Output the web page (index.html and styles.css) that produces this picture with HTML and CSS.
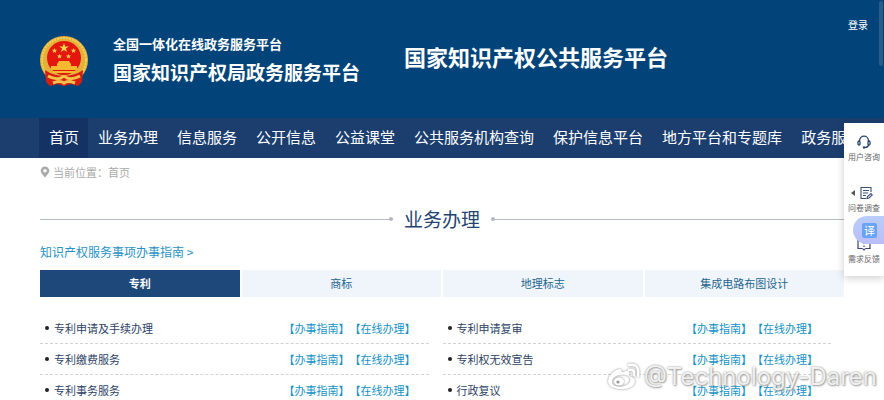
FILE: index.html
```html
<!DOCTYPE html>
<html lang="zh-CN">
<head>
<meta charset="utf-8">
<title>国家知识产权公共服务平台</title>
<link rel="stylesheet" href="styles.css">
</head>
<body>
<header class="header">
  <svg class="emblem" viewBox="0 0 48 50" aria-hidden="true">
    <circle cx="24" cy="24" r="24" fill="#e3b03a"/>
    <circle cx="24" cy="24" r="22" fill="none" stroke="#f4cf5c" stroke-width="2" stroke-dasharray="2 1"/>
    <path d="M5 34 L10 37 Q24 43 38 37 L43 34 L42 46 L38 50 L31 48 L24 50 L17 48 L10 50 L6 46 Z" fill="#d81e12"/>
    <circle cx="24" cy="22" r="17" fill="#e3170d"/>
    <path d="M24 7 l1.2 3.4 3.6 0 -2.9 2.2 1.1 3.5 -3 -2.1 -3 2.1 1.1 -3.5 -2.9 -2.2 3.6 0z" fill="#f9d34b"/>
    <path d="M14.500 12 l.7 1.800 2 0 -1.600 1.200 .6 1.900 -1.700 -1.100 -1.700 1.100 .6 -1.900 -1.600 -1.200 2 0z M33.500 12 l.7 1.800 2 0 -1.600 1.200 .6 1.900 -1.700 -1.100 -1.700 1.100 .6 -1.900 -1.600 -1.200 2 0z M19.500 18 l.7 1.600 1.800 0 -1.400 1.100 .5 1.700 -1.600 -1 -1.600 1 .5 -1.700 -1.400 -1.100 1.800 0z M28.500 18 l.7 1.600 1.800 0 -1.400 1.100 .5 1.700 -1.600 -1 -1.600 1 .5 -1.700 -1.400 -1.100 1.800 0z" fill="#f9d34b"/>
    <path d="M19 25 H29 L31 28 H17 Z M17 28 H31 V30 H37 V34 H11 V30 H17 Z M12 35 H36 V37 H12 Z" fill="#f5b82e"/>
    <path d="M8 40 Q15 44 21 42 Q24 39 27 42 Q33 44 40 40 M13 47 Q20 44 24 47 Q28 44 35 47" fill="none" stroke="#f2c14a" stroke-width="3"/>
  </svg>
  <div class="brand">
    <span class="brand-top">全国一体化在线政务服务平台</span>
    <span class="brand-main">国家知识产权局政务服务平台</span>
  </div>
  <h1 class="site-title">国家知识产权公共服务平台</h1>
  <a class="login" href="#">登录</a>
</header>
<nav class="nav">
  <a class="nav-item active" href="#">首页</a>
  <a class="nav-item" href="#">业务办理</a>
  <a class="nav-item" href="#">信息服务</a>
  <a class="nav-item" href="#">公开信息</a>
  <a class="nav-item" href="#">公益课堂</a>
  <a class="nav-item" href="#">公共服务机构查询</a>
  <a class="nav-item" href="#">保护信息平台</a>
  <a class="nav-item" href="#">地方平台和专题库</a>
  <a class="nav-item" href="#">政务服务</a>
</nav>
<main class="content">
  <div class="crumbs">
    <svg class="pin" viewBox="0 0 10 12" aria-hidden="true"><path fill-rule="evenodd" d="M5 0.500 A4.300 4.300 0 0 1 9.300 4.800 C9.300 7.500 6.500 9.500 5 11.500 C3.500 9.500 .7 7.500 .7 4.800 A4.300 4.300 0 0 1 5 .5 Z M5 3 A1.800 1.800 0 1 0 5 6.600 A1.800 1.800 0 1 0 5 3 Z" fill="#aaa"/></svg>
    <span>当前位置：<a href="#">首页</a></span>
  </div>
  <div class="section-head">
    <span class="rule rule-left"></span>
    <h2>业务办理</h2>
    <span class="rule rule-right"></span>
  </div>
  <a class="guide" href="#">知识产权服务事项办事指南 &gt;</a>
  <div class="tabs">
    <button class="tab selected" type="button">专利</button>
    <button class="tab" type="button">商标</button>
    <button class="tab" type="button">地理标志</button>
    <button class="tab" type="button">集成电路布图设计</button>
  </div>
  <ul class="services">
    <li><span class="name">专利申请及手续办理</span><a href="#">【办事指南】</a><a href="#">【在线办理】</a></li>
    <li><span class="name">专利申请复审</span><a href="#">【办事指南】</a><a href="#">【在线办理】</a></li>
    <li><span class="name">专利缴费服务</span><a href="#">【办事指南】</a><a href="#">【在线办理】</a></li>
    <li><span class="name">专利权无效宣告</span><a href="#">【办事指南】</a><a href="#">【在线办理】</a></li>
    <li><span class="name">专利事务服务</span><a href="#">【办事指南】</a><a href="#">【在线办理】</a></li>
    <li><span class="name">行政复议</span><a href="#">【办事指南】</a><a href="#">【在线办理】</a></li>
  </ul>
</main>
<aside class="side">
  <a class="side-item" href="#">
    <svg viewBox="0 0 14 14" aria-hidden="true"><g fill="none" stroke="#29466f" stroke-width="1.300"><path d="M2.500 6 C2.500 -.5 11.500 -.5 11.500 6 M11.500 10 Q11 12.500 8 12.500"/><rect x="1" y="6" width="2" height="4" rx="1"/><rect x="11" y="6" width="2" height="4" rx="1"/></g><circle cx="7" cy="12.500" r="1.200" fill="#29466f"/></svg>
    <span>用户咨询</span>
  </a>
  <a class="side-item" href="#">
    <svg class="shifted" viewBox="0 0 14 14" aria-hidden="true"><path d="M12 6 V1.500 H2 V12.500 H7 M4 4.500 H10 M4 7 H9 M4 9.500 H7 M8 12.500 L8.500 10.500 L12 7.500 L13.300 9 L10 12 Z" fill="none" stroke="#3b5278" stroke-width="1.100"/></svg>
    <span>问卷调查</span>
  </a>
  <a class="side-item" href="#">
    <svg viewBox="0 0 14 14" aria-hidden="true"><path d="M4 2.500 H1 V11.500 H5 Q6 11.500 7 13 Q8 11.500 9 11.500 H13 V2.500 H10 M7 2 V7 M7 8.500 V10" fill="none" stroke="#3b4470" stroke-width="1.200"/></svg>
    <span>需求反馈</span>
  </a>
  <span class="collapse"></span>
  <button class="translate" type="button"><span>译</span></button>
</aside>
<span class="scroll-thumb"></span>
<div class="watermark">
  <svg viewBox="0 0 34 28" aria-hidden="true"><path fill-rule="evenodd" fill="#fff" d="M22 13 Q24 7 19 8 Q16 9 15 9 Q15 4 9 7 Q2 11 1 18 C1 29 28 29 28 18 Q28 15 22 13 Z M13 12 C23 11 25 16 22 20 C18 25 5 25 5 19 C5 15 8 12.500 13 12 Z"/><path d="M22 7 Q28 6 27 12 M22 2 Q33 0 31 13" fill="none" stroke="#fff" stroke-width="2.500" stroke-linecap="round"/><ellipse cx="12" cy="18.500" rx="5" ry="4" fill="#fff"/><circle cx="11" cy="19" r="1.600" fill="#999"/></svg>
  <span>@Technology-Daren</span>
</div>
</body>
</html>
```
FILE: styles.css
```css
* {
  box-sizing: border-box;
}

body {
  position: relative;
  height: 100vh;
  margin: 0;
  overflow: hidden;
  background: #fff;
  font-family: "Noto Sans CJK SC", sans-serif;
  font-size: 11px;
}

a {
  color: inherit;
  text-decoration: none;
}

.header {
  display: flex;
  height: 118px;
  padding: 0 16px 0 40px;
  background: #024479;
  color: #fff;
}

.emblem {
  width: 48px;
  height: 50px;
  margin-top: 36px;
}

.brand {
  display: flex;
  flex-direction: column;
  margin: 34px 0 0 25px;
  font-weight: 700;
  white-space: nowrap;
}

.brand-top {
  font-size: 13px;
  line-height: 20px;
}

.brand-main {
  margin-top: 4px;
  font-size: 19px;
  line-height: 28px;
}

.site-title {
  margin: 40px 0 0 44px;
  font-size: 22px;
  line-height: 32px;
  white-space: nowrap;
}

.login {
  margin: 17px 0 0 auto;
  font-size: 10px;
  line-height: 16px;
}

.nav {
  display: flex;
  height: 40px;
  padding-left: 39px;
  overflow: hidden;
  background: #1b3e6f;
  color: #fff;
  font-size: 15px;
  line-height: 38px;
}

.nav-item {
  flex: none;
  padding: 0 9px 0 10px;
}

.nav-item.active {
  height: 40px;
  background: #143264;
}

.content {
  padding: 0 40px;
}

.crumbs {
  display: flex;
  align-items: center;
  gap: 3px;
  height: 28px;
  color: #aaa;
}

.pin {
  width: 10px;
  height: 12px;
}

.section-head {
  display: flex;
  align-items: center;
  gap: 11px;
  margin-top: 18px;
}

.section-head h2 {
  margin: 0;
  color: #23446f;
  font-size: 19px;
  font-weight: 400;
  line-height: 30px;
}

.rule {
  position: relative;
  flex: 1;
  height: 1px;
  background: #b8bcc5;
}

.rule::after {
  content: "";
  position: absolute;
  top: -2px;
  width: 4px;
  height: 4px;
  border-radius: 50%;
  background: #b3b8c4;
}

.rule-left::after {
  right: 0;
}

.rule-right::after {
  left: 0;
}

.guide {
  display: block;
  margin-top: 8px;
  color: #2792c5;
  font-size: 12px;
  line-height: 20px;
}

.tabs {
  display: grid;
  grid-template-columns: repeat(4, 1fr);
  gap: 2px;
  margin-top: 8px;
}

.tab {
  height: 27px;
  padding: 0 0 2px;
  border: 0;
  background: #f0f4fb;
  color: #236690;
  font: inherit;
}

.tab.selected {
  background: #1d4879;
  color: #fff;
  font-weight: 700;
}

.services {
  display: grid;
  grid-template-columns: 1fr 1fr;
  column-gap: 14px;
  margin: 16px 0 0;
  padding: 0 13px 0 0;
  list-style: none;
}

.services li {
  display: flex;
  align-items: center;
  height: 31px;
  padding: 0 13px 1px 5px;
  border-bottom: 1px dashed #d3d3d3;
  color: #2d4265;
}

.services li::before {
  content: "";
  width: 4px;
  height: 4px;
  margin-right: 5px;
  border-radius: 50%;
  background: #222;
}

.services .name {
  margin-right: auto;
}

.services a {
  color: #1592c6;
}

.side {
  position: absolute;
  top: 123px;
  right: 0;
  width: 40px;
  background: #fff;
  box-shadow: 0 2px 8px rgba(0, 0, 0, 0.2);
}

.side-item {
  display: flex;
  flex-direction: column;
  align-items: center;
  gap: 2px;
  height: 51px;
  padding-top: 12px;
  color: #666;
  font-size: 8px;
  line-height: 12px;
}

.side-item svg {
  width: 14px;
  height: 14px;
}

.side-item .shifted {
  margin-left: 4px;
}

.collapse {
  position: absolute;
  top: 67px;
  left: 7px;
  border: solid transparent;
  border-width: 3px 4px 3px 0;
  border-right-color: #555;
}

.translate {
  position: absolute;
  top: 93px;
  right: 0;
  display: flex;
  align-items: center;
  width: 31px;
  height: 28px;
  padding: 0 0 0 9px;
  border: 0;
  border-radius: 14px 0 0 14px;
  background: linear-gradient(#b9cdfb, #b9bff8);
  color: #fff;
  font: inherit;
}

.translate span {
  width: 15px;
  border-radius: 2px;
  background: #69a3f6;
  line-height: 15px;
}

.scroll-thumb {
  position: absolute;
  top: 1px;
  right: 1px;
  width: 4px;
  height: 65px;
  border-radius: 2px;
  background: #2b5b87;
}

.watermark {
  position: absolute;
  right: 7px;
  bottom: 8px;
  display: flex;
  align-items: center;
  gap: 3px;
  color: rgba(255, 255, 255, 0.85);
  font-family: Inter, sans-serif;
  font-size: 24px;
  line-height: 30px;
  text-shadow: 0 0 2px #888, 1px 1px 2px #aaa;
  pointer-events: none;
}

.watermark svg {
  width: 34px;
  height: 28px;
  filter: drop-shadow(0 0 1px #888);
}
```
